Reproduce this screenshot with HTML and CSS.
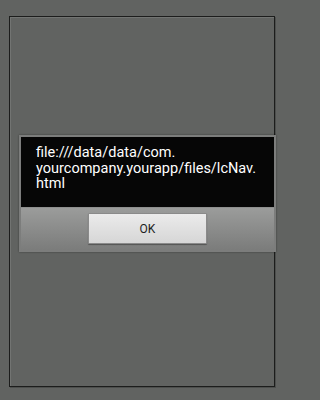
FILE: index.html
```html
<!DOCTYPE html>
<html>
<head>
<meta charset="utf-8">
<link rel="stylesheet" href="styles.css">
</head>
<body>
<div class="screen">
  <div class="frame"></div>
  <div class="dialog">
    <div class="message">file:///data/data/com.<br>yourcompany.yourapp/files/lcNav.<br>html</div>
    <div class="actions">
      <button class="ok">OK</button>
    </div>
  </div>
</div>
</body>
</html>
```
FILE: styles.css
```css
html, body {
  margin: 0;
  padding: 0;
  background: #616361;
}
.screen {
  position: relative;
  width: 285px;
  height: 400px;
  padding: 16px 0 0 9px;
  box-sizing: border-box;
}
.frame {
  width: 266px;
  height: 371px;
  box-sizing: border-box;
  border: 1px solid #1c1d1c;
  box-shadow: inset 1px 1px 0 #727472, 1px 1px 0 #4d4f4d;
}
.dialog {
  position: absolute;
  left: 19px;
  top: 135px;
  width: 257px;
  height: 117px;
  box-sizing: border-box;
  border: 2px solid #7c7d7c;
  background: #7a7b7a;
  box-shadow: 0 0 2px rgba(0,0,0,0.4);
  display: flex;
  flex-direction: column;
}
.message {
  background: #060606;
  height: 70px;
  box-sizing: border-box;
  padding: 8px 4px 0 15px;
  color: #ffffff;
  font-family: Roboto, "Liberation Sans", sans-serif;
  font-size: 14.5px;
  line-height: 15.5px;
  white-space: nowrap;
}
.actions {
  flex: 1;
  border-top: 1px solid #8e8f8e;
  background: linear-gradient(#9b9c9b, #7b7c7b);
  display: flex;
  justify-content: center;
  padding-top: 5px;
  box-sizing: border-box;
}
.ok {
  width: 119px;
  height: 31px;
  margin: 0;
  padding: 0;
  border: 1px solid #8a8a8a;
  border-radius: 1px;
  background: linear-gradient(#ebebeb, #d6d6d6);
  box-shadow: 0 1px 1px rgba(0,0,0,0.35);
  font-family: Roboto, "Liberation Sans", sans-serif;
  font-size: 12px;
  color: #1e1e1e;
}
```
